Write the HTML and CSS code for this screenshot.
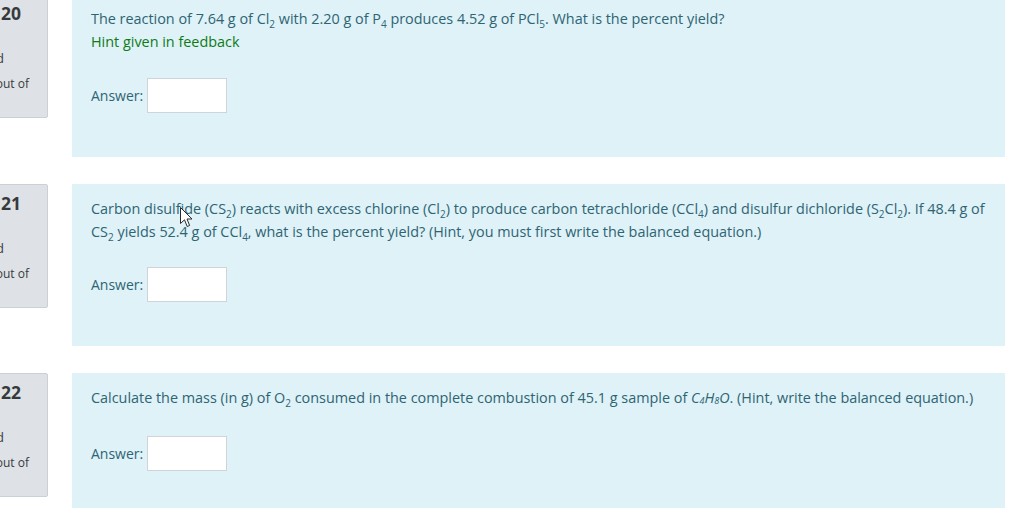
FILE: index.html
```html
<!DOCTYPE html>
<html lang="en">
<head>
<meta charset="utf-8">
<title>Quiz</title>
<link rel="stylesheet" href="styles.css">
</head>
<body>
<div class="page">
  <div class="que">
    <div class="info">
      <h3 class="no">Question <span class="qno">20</span></h3>
      <div class="state">Not yet answered</div>
      <div class="grade">Marked out of</div>
    </div>
    <div class="content">
      <div class="formulation">
        <div class="qtext qtext-hint">
          <p>The reaction of 7.64 g of Cl<sub>2</sub> with 2.20 g of P<sub>4</sub> produces 4.52 g of PCl<sub>5</sub>. What is the percent yield?</p>
          <p class="hint">Hint given in feedback</p>
        </div>
        <div class="ablock">
          <label class="alabel">Answer:</label>
          <input class="answer" type="text">
        </div>
      </div>
    </div>
  </div>

  <div class="que">
    <div class="info">
      <h3 class="no">Question <span class="qno">21</span></h3>
      <div class="state">Not yet answered</div>
      <div class="grade">Marked out of</div>
    </div>
    <div class="content">
      <div class="formulation">
        <div class="qtext">
          <p>Carbon disulfide (CS<sub>2</sub>) reacts with excess chlorine (Cl<sub>2</sub>) to produce carbon tetrachloride (CCl<sub>4</sub>) and disulfur dichloride (S<sub>2</sub>Cl<sub>2</sub>). If 48.4 g of CS<sub>2</sub> yields 52.4 g of CCl<sub>4</sub>, what is the percent yield? (Hint, you must first write the balanced equation.)</p>
        </div>
        <div class="ablock">
          <label class="alabel">Answer:</label>
          <input class="answer" type="text">
        </div>
      </div>
      <svg class="cursor" width="13" height="21" viewBox="0 0 13 21">
        <path d="M0.5,0.5 L0.5,16.5 L4.5,12.8 L7.2,19.5 L9.6,18.5 L7,12 L12,12 Z" fill="#ffffff" stroke="#2a2a2a" stroke-width="1" stroke-linejoin="round"/>
      </svg>
    </div>
  </div>

  <div class="que">
    <div class="info">
      <h3 class="no">Question <span class="qno">22</span></h3>
      <div class="state">Not yet answered</div>
      <div class="grade">Marked out of</div>
    </div>
    <div class="content">
      <div class="formulation">
        <div class="qtext qtext-single">
          <p>Calculate the mass (in g) of O<sub>2</sub> consumed in the complete combustion of 45.1 g sample of <i>C<sub class="isub">4</sub>H<sub class="isub">8</sub>O</i>. (Hint, write the balanced equation.)</p>
        </div>
        <div class="ablock">
          <label class="alabel">Answer:</label>
          <input class="answer" type="text">
        </div>
      </div>
    </div>
  </div>
</div>
</body>
</html>
```

FILE: styles.css
```css
html, body {
  margin: 0;
  padding: 0;
  background: #ffffff;
  overflow: hidden;
}

body {
  font-family: "Open Sans", "Noto Sans", "Liberation Sans", sans-serif;
  font-size: 14.4px;
  color: #2f6473;
}

.page {
  margin-top: -6px;
}

.que {
  display: flex;
  align-items: flex-start;
  gap: 24px;
  margin-bottom: 27px;
}

.info {
  box-sizing: border-box;
  flex: 0 0 240px;
  width: 240px;
  margin-left: -192px;
  height: 124px;
  background: #dee2e6;
  border: 1px solid #cad0d7;
  border-radius: 2px;
  color: #373a3c;
  white-space: nowrap;
  overflow: hidden;
}

.no {
  margin: 0;
  padding: 7px 26px 0 0;
  text-align: right;
  font-size: 12px;
  font-weight: normal;
  line-height: 22px;
  color: #373a3c;
}

.qno {
  font-size: 17.5px;
  font-weight: bold;
}

.state {
  margin-top: 23px;
  padding-right: 43px;
  text-align: right;
  font-size: 12.5px;
  line-height: 18px;
}

.grade {
  margin-top: 7px;
  padding-right: 18px;
  text-align: right;
  font-size: 12px;
  line-height: 18px;
}

.content {
  position: relative;
  flex: 0 0 933px;
  width: 933px;
}

.formulation {
  background: #def2f8;
  padding: 14px 20px 44px 19px;
}

.qtext p {
  margin: 0;
  line-height: 22.5px;
}

.qtext {
  margin-bottom: 24px;
}

.qtext-hint {
  margin-bottom: 25px;
}

.qtext-single {
  margin-bottom: 26px;
}

.hint {
  color: #0f7a16;
}

sub {
  font-size: 10px;
  line-height: 0;
}

.isub {
  font-size: 9px;
  vertical-align: -1px;
}

.ablock {
  display: flex;
  align-items: center;
  gap: 4px;
}

.alabel {
  font-size: 14px;
}

.answer {
  box-sizing: border-box;
  width: 80px;
  height: 35px;
  margin: 0;
  border: 1px solid #ced4da;
  border-radius: 0;
  background: #ffffff;
  font: inherit;
  padding: 4px 8px;
}

.cursor {
  position: absolute;
  left: 108px;
  top: 23px;
}
```
